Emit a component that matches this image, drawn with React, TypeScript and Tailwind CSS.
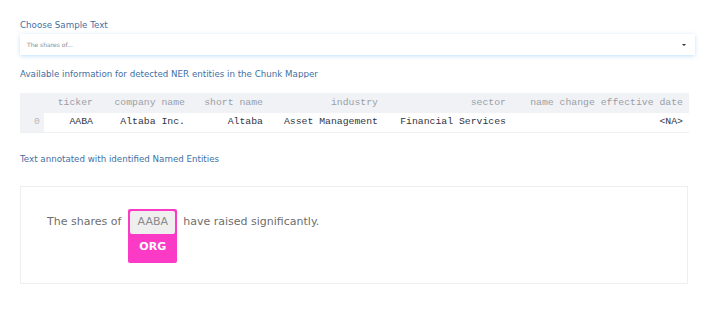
import React from "react";

const sans = "font-['DejaVu_Sans',sans-serif]";
const mono = "font-['Liberation_Mono',monospace]";

const columns = [
  { key: "ticker", label: "ticker", w: "w-[55px]" },
  { key: "company", label: "company name", w: "w-[92px]" },
  { key: "short", label: "short name", w: "w-[78px]" },
  { key: "industry", label: "industry", w: "w-[115px]" },
  { key: "sector", label: "sector", w: "w-[128px]" },
  { key: "change", label: "name change effective date", w: "w-[177px]" },
];

const row: Record<string, string> = {
  ticker: "AABA",
  company: "Altaba Inc.",
  short: "Altaba",
  industry: "Asset Management",
  sector: "Financial Services",
  change: "<NA>",
};

function MapperTable() {
  return (
    <div className={`mt-[15px] w-[669px] border-b border-[#eef0f3] ${mono} text-[9.8px]`}>
      <div className="flex h-[20px] items-center bg-[#f0f2f6] text-[#9a9ea6]">
        <div className="w-[24px]" />
        {columns.map((c) => (
          <div key={c.key} className={`${c.w} pr-[6px] text-right whitespace-nowrap`}>
            {c.label}
          </div>
        ))}
      </div>
      <div className="flex h-[19px] items-center">
        <div className="flex h-full w-[24px] items-center justify-center bg-[#f0f2f6] pl-[10px] text-[#b4b8bf]">
          0
        </div>
        {columns.map((c) => (
          <div key={c.key} className={`${c.w} pr-[6px] text-right whitespace-nowrap text-[#31333f]`}>
            {row[c.key]}
          </div>
        ))}
      </div>
    </div>
  );
}

function Entity({ text, label }: { text: string; label: string }) {
  return (
    <span className="ml-[7px] inline-flex w-[49px] flex-col rounded-[2px] bg-[#fb3ac6] p-[2px]">
      <span className="flex h-[23px] items-center justify-center rounded-[2px] bg-[#efefef] text-[#8a8a8a]">
        {text}
      </span>
      <span className="flex h-[27px] items-center justify-center text-[11px] font-semibold text-white">
        {label}
      </span>
    </span>
  );
}

export default function App() {
  return (
    <div className={`h-[309px] w-[710px] overflow-hidden bg-white pl-[20px] pr-[15px] pt-[19px] ${sans}`}>
      <div className="text-[8.7px] leading-[12px] text-[#3f6fa2]">Choose Sample Text</div>

      <div className="mt-[3px] flex h-[21px] items-center justify-between bg-white pl-[7px] pr-[9px] shadow-[0_1px_4px_rgba(80,170,240,0.35)]">
        <span className="text-[6px] text-[#8c8c8c]">The shares of...</span>
        <span className="h-0 w-0 border-x-[2px] border-t-[2px] border-x-transparent border-t-[#333]" />
      </div>

      <div className="mt-[14px] h-[9px] overflow-hidden text-[8.7px] leading-[11px] text-[#3f6fa2]">
        Available information for detected NER entities in the Chunk Mapper
      </div>

      <MapperTable />

      <div className="mt-[20px] text-[8.7px] leading-[12px] text-[#3f6fa2]">
        Text annotated with identified Named Entities
      </div>

      <div className="mt-[21px] flex h-[98px] w-[668px] items-start border border-[#eceef2] pl-[26px] pt-[22px] text-[11px] text-[#6e6e6e]">
        <span className="mt-[2px] flex h-[23px] items-center">The shares of</span>
        <Entity text="AABA" label="ORG" />
        <span className="ml-[6px] mt-[2px] flex h-[23px] items-center">have raised significantly.</span>
      </div>
    </div>
  );
}
